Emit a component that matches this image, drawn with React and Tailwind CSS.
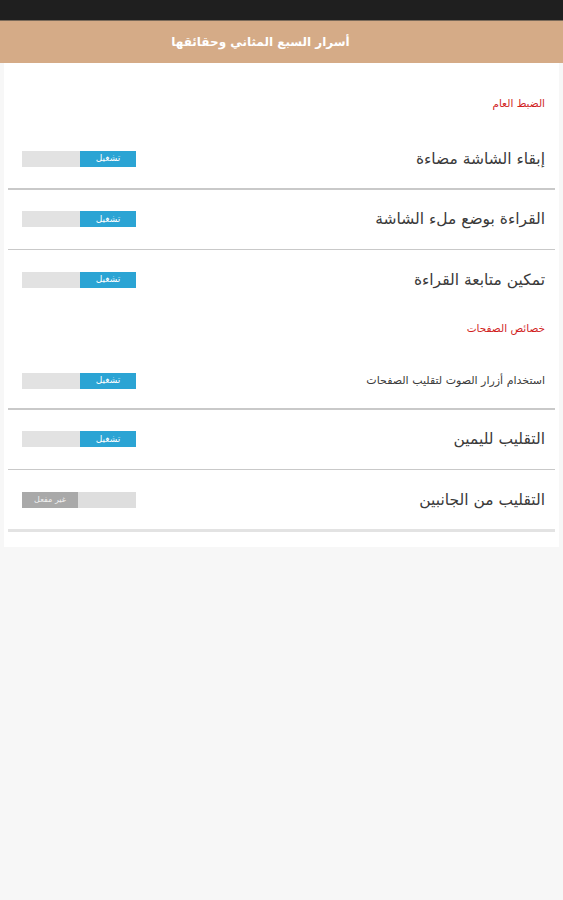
import React from "react";

const font = { fontFamily: '"DejaVu Sans", Tahoma, sans-serif' };

function Toggle({ on }) {
  if (on) {
    return (
      <div className="flex h-[16px] w-[114px] shrink-0">
        <div className="w-[58px] bg-[#e2e2e2]" />
        <div className="flex flex-1 items-center justify-center bg-[#2ba4d4] text-[9px] leading-none text-white">
          تشغيل
        </div>
      </div>
    );
  }
  return (
    <div className="flex h-[16px] w-[114px] shrink-0 bg-[#dedede]">
      <div className="flex w-[56px] items-center justify-center bg-[#a9a9a9] text-[8px] leading-none text-[#f2f2f2]">
        غير مفعل
      </div>
    </div>
  );
}

function Row({ label, on, small, divider, thick }) {
  return (
    <div className="mx-[4px]">
      <div
        className={`flex h-[59px] items-center justify-between pl-[14px] pr-[10px] ${small ? "pt-[4px]" : ""}`}
        dir="ltr"
      >
        <Toggle on={on} />
        <div
          dir="rtl"
          className={`${small ? "text-[11px]" : "text-[15.5px]"} pt-[2px] text-[#3a3a3a]`}
        >
          {label}
        </div>
      </div>
      {divider && (
        <div className={thick ? "h-[3px] bg-[#e3e3e3]" : "h-[1.5px] bg-[#c9c9c9]"} />
      )}
    </div>
  );
}

function Section({ title, height, pt }) {
  return (
    <div className={`${height} ${pt} pr-[14px] text-right`} dir="rtl">
      <span className="text-[10.5px] text-[#d11f1f]">{title}</span>
    </div>
  );
}

export default function App() {
  return (
    <div style={font} className="min-h-[900px] w-[563px] bg-[#f7f7f7]">
      <div className="h-[20px] bg-[#1f1f1f]" />
      <div className="h-[1px] bg-[#7a6a5a]" />
      <div className="flex h-[42px] items-center justify-center bg-[#d5ab87] pr-[42px] text-[12px] font-bold text-white" dir="rtl">
        أسرار السبع المثاني وحقائقها
      </div>
      <div className="ml-[4px] mr-[4px] bg-white pb-[15px]">
        <Section title="الضبط العام" height="h-[66px]" pt="pt-[27px]" />
        <Row label="إبقاء الشاشة مضاءة" on divider />
        <Row label="القراءة بوضع ملء الشاشة" on divider />
        <Row label="تمكين متابعة القراءة" on />
        <Section title="خصائص الصفحات" height="h-[40px]" pt="pt-[6px]" />
        <Row label="استخدام أزرار الصوت لتقليب الصفحات" on small divider />
        <Row label="التقليب لليمين" on divider />
        <Row label="التقليب من الجانبين" on={false} divider thick />
      </div>
    </div>
  );
}
